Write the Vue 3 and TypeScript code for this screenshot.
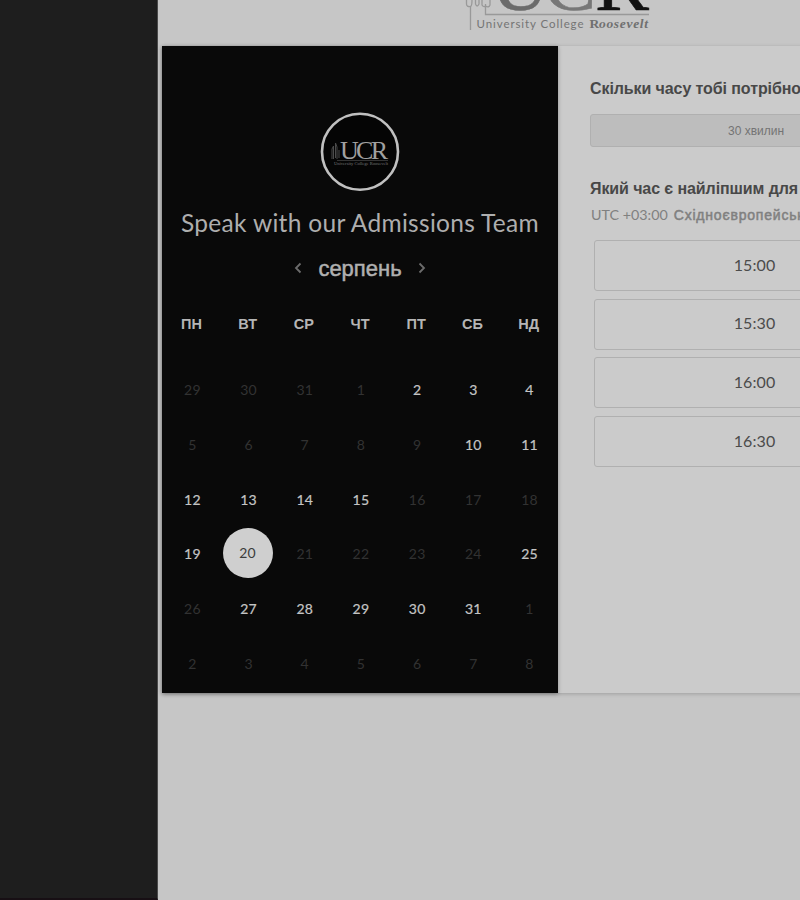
<script setup lang="ts">
interface Day {
  label: number
  open: boolean
  selected: boolean
}

const weekdays: string[] = ['ПН', 'ВТ', 'СР', 'ЧТ', 'ПТ', 'СБ', 'НД']

const numbers: number[] = [
  29, 30, 31, ...Array.from({ length: 31 }, (_, i) => i + 1), 1, 2, 3, 4, 5, 6, 7, 8,
]
const openDays = new Set<number>([2, 3, 4, 10, 11, 12, 13, 14, 15, 19, 25, 27, 28, 29, 30, 31])

const days: Day[] = numbers.map((label, i) => {
  const inMonth = i >= 3 && i < 34
  return {
    label,
    open: inMonth && openDays.has(label),
    selected: inMonth && label === 20,
  }
})

const slots: string[] = ['15:00', '15:30', '16:00', '16:30']
</script>

<template>
  <div class="screen">
    <aside class="rail"></aside>
    <main class="page">
      <header class="brand">
        <svg class="logo" width="190" height="34" viewBox="0 0 190 34">
          <g fill="none" stroke="#999" stroke-width="1.3">
            <path d="M10.500 30V6.500Q6.500 7 6.500 4V0M10.500 6.500Q12 6 12 0M15.500 0V4Q17 8 19 4V0M22 0V5Q23.500 7.500 25.500 6M25.500 4V14.500H189M30 0V5Q29 8 25.500 6" />
          </g>
          <text class="mark" x="31" y="10" textLength="58" lengthAdjust="spacingAndGlyphs" fill="#6b6b6b" stroke="#6b6b6b">U</text>
          <text class="mark" x="84" y="10" textLength="52" lengthAdjust="spacingAndGlyphs" fill="#777" stroke="#777">C</text>
          <text class="mark" x="135" y="10" textLength="54" lengthAdjust="spacingAndGlyphs" fill="#111" stroke="#111">R</text>
          <text class="caption" x="16.500" y="27.500" textLength="107">University College</text>
          <text class="name" x="129.500" y="27.500" textLength="10">R</text>
          <text class="name slant" x="139" y="27.500" textLength="49">oosevelt</text>
        </svg>
      </header>

      <section class="booking">
        <div class="calendar">
          <svg class="avatar" width="80" height="80" viewBox="0 0 80 80">
            <circle cx="40" cy="39.700" r="38" fill="#050505" stroke="#c0c0c0" stroke-width="2.600" />
            <path d="M12 47V37L13.500 34V47M15.500 46V31L17 35V47M19 46V38" fill="none" stroke="#4b4b4b" stroke-width="1" />
            <text class="avatar-mark" x="20" y="47" textLength="48">UCR</text>
            <path d="M17 48.500H68" stroke="#474747" stroke-width=".7" />
            <text class="avatar-caption" x="14" y="52.500" textLength="54">University College Roosevelt</text>
          </svg>
          <h1>Speak with our Admissions Team</h1>
          <div class="month">
            <svg width="8" height="12" viewBox="0 0 8 12"><path d="M6.500 1.500L2 6L6.500 10.500" /></svg>
            <span>серпень</span>
            <svg width="8" height="12" viewBox="0 0 8 12"><path d="M1.500 1.500L6 6L1.500 10.500" /></svg>
          </div>
          <div class="weekdays">
            <span v-for="w in weekdays" :key="w">{{ w }}</span>
          </div>
          <div class="days">
            <span
              v-for="(d, i) in days"
              :key="i"
              class="day"
              :class="{ open: d.open, selected: d.selected }"
            >{{ d.label }}</span>
          </div>
        </div>

        <div class="times">
          <h2>Скільки часу тобі потрібно?</h2>
          <button class="duration" type="button">30 хвилин</button>
          <h2 class="second">Який час є найліпшим для тебе?</h2>
          <p class="zone"><span>UTC +03:00</span> <b>Східноєвропейський час</b></p>
          <div class="slots">
            <button v-for="s in slots" :key="s" type="button" class="slot">{{ s }}</button>
          </div>
        </div>
      </section>
    </main>
  </div>
</template>

<style>
body {
  margin: 0;
  overflow: hidden;
}
</style>

<style scoped>
.screen {
  display: flex;
  width: 800px;
  height: 900px;
  overflow: hidden;
  background: #c6c6c6;
  font-family: Lato, 'Liberation Sans', sans-serif;
}
.rail {
  box-sizing: border-box;
  flex: 0 0 158px;
  background: #1e1e1e;
  border-right: 1px solid #4a4a4a;
  border-bottom: 2px solid #170f14;
}
.page {
  flex: 0 0 800px;
  padding-left: 4px;
}
.brand {
  height: 46px;
  padding-left: 298px;
}
.logo {
  display: block;
}
.mark {
  font-family: 'Liberation Serif', serif;
  font-size: 74px;
  stroke-width: 0.6;
}
.caption {
  font-family: Lato, sans-serif;
  font-size: 11.5px;
  fill: #747474;
}
.name {
  font-family: 'Liberation Serif', serif;
  font-size: 13.5px;
  font-weight: bold;
  fill: #707070;
}
.slant {
  font-style: italic;
}
.booking {
  display: flex;
  width: 792px;
  height: 647px;
  background: #cbcbcb;
  box-shadow: 0 1px 4px rgba(0, 0, 0, 0.2);
}
.calendar {
  box-sizing: border-box;
  flex: 0 0 396px;
  display: flex;
  flex-direction: column;
  align-items: center;
  padding-top: 66px;
  background: #090909;
  box-shadow: 0 1px 4px rgba(0, 0, 0, 0.3);
}
.avatar {
  flex: none;
}
.avatar-mark {
  font-family: 'Liberation Serif', serif;
  font-size: 26px;
  fill: #a0a0a0;
}
.avatar-caption {
  font-family: 'Liberation Serif', serif;
  font-size: 4.5px;
  fill: #777;
}
h1 {
  margin: 16px 0 0;
  font-size: 24.5px;
  font-weight: 400;
  line-height: 30px;
  letter-spacing: 0.3px;
  white-space: nowrap;
  color: #aeaeae;
}
.month {
  display: flex;
  align-items: center;
  gap: 16px;
  height: 30px;
  margin-top: 15px;
  font-family: 'Liberation Sans', sans-serif;
  font-size: 22px;
  color: #b0b0b0;
  -webkit-text-stroke: 0.5px #b0b0b0;
}
.month span {
  padding-top: 2px;
}
.month svg {
  fill: none;
  stroke: #6c6c6c;
  stroke-width: 1.8;
}
.weekdays,
.days {
  display: grid;
  grid-template-columns: repeat(7, 56.2px);
  justify-items: center;
}
.weekdays {
  margin-top: 31px;
  font-family: 'Liberation Sans', sans-serif;
  font-size: 14.5px;
  font-weight: bold;
  line-height: 20px;
  color: #b5b5b5;
}
.days {
  grid-auto-rows: 54.7px;
  align-items: center;
  margin-top: 28.3px;
}
.day {
  padding-left: 2px;
  font-size: 14px;
  letter-spacing: 0.3px;
  color: #323232;
}
.day.open {
  color: #c4c4c4;
  -webkit-text-stroke: 0.2px #c4c4c4;
}
.day.selected {
  box-sizing: border-box;
  width: 50px;
  height: 50px;
  margin-bottom: 1px;
  padding: 0;
  border-radius: 50%;
  background: #cfcfcf;
  color: #3c3c3c;
  line-height: 49px;
  text-align: center;
}
.times {
  box-sizing: border-box;
  flex: 0 0 396px;
  padding: 33px 32px 0;
}
h2 {
  margin: 0;
  font-family: 'Liberation Sans', sans-serif;
  font-size: 16px;
  line-height: 20px;
  letter-spacing: -0.09px;
  white-space: nowrap;
  color: #484848;
}
.duration {
  display: block;
  box-sizing: border-box;
  width: 332px;
  height: 33px;
  margin-top: 15px;
  padding: 0;
  border: 1px solid #b0b0b0;
  border-radius: 3px;
  background: #bdbdbd;
  font-family: 'Liberation Sans', sans-serif;
  font-size: 12px;
  color: #747474;
}
.second {
  margin-top: 32px;
}
.zone {
  display: flex;
  gap: 6px;
  margin: 6px 0 0 1px;
  font-size: 14.3px;
  line-height: 20px;
  white-space: nowrap;
  color: #808080;
}
.zone b {
  font-family: 'Liberation Sans', sans-serif;
  font-size: 14px;
  font-weight: 400;
  letter-spacing: 0.8px;
  -webkit-text-stroke: 0.5px #808080;
}
.slots {
  display: grid;
  gap: 7.7px;
  margin: 15px 0 0 4px;
}
.slot {
  box-sizing: border-box;
  width: 321px;
  height: 51px;
  padding: 0 0 3px;
  border: 1px solid #b0b0b0;
  border-radius: 3px;
  background: #cbcbcb;
  font-family: Lato, sans-serif;
  font-size: 16px;
  letter-spacing: 0.1px;
  color: #4c4c4c;
}
</style>
